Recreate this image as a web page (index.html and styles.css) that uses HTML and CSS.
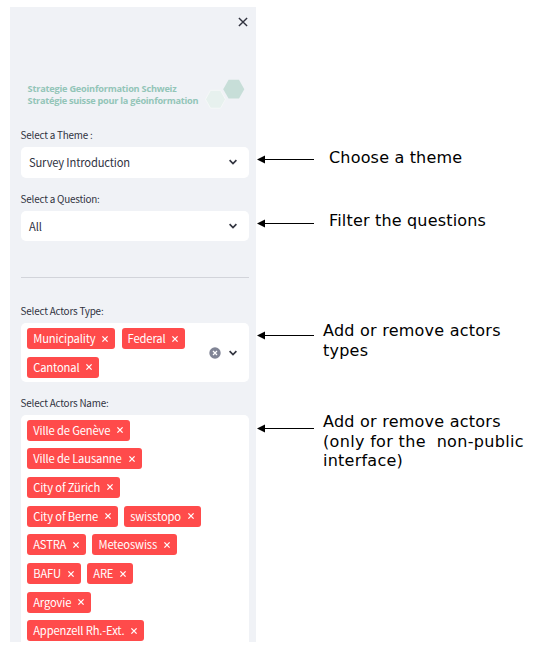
FILE: index.html
```html
<!DOCTYPE html>
<html lang="en">
<head>
<meta charset="utf-8">
<title>Survey sidebar guide</title>
<link rel="stylesheet" href="styles.css">
</head>
<body>
<svg class="defs" width="0" height="0" aria-hidden="true">
  <symbol id="cross" viewBox="0 0 8 8"><path d="M1.4 1.4 6.6 6.6M6.6 1.4 1.4 6.6"/></symbol>
  <symbol id="chevron" viewBox="0 0 10 8"><path d="M1.6 2.2 5 5.5 8.4 2.2"/></symbol>
  <symbol id="arrow" viewBox="0 0 57 9"><path d="M6 4.5H57" stroke="#000" stroke-width="1"/><path d="M0 4.5 8 .5V8.5Z"/></symbol>
</svg>
<main class="guide">
  <aside class="sidebar">
    <header class="top"><svg class="close" viewBox="0 0 10 10"><path d="M.9.9 9.1 9.1M9.1.9.9 9.1"/></svg></header>
    <div class="brand">
      <p class="brand-text"><span class="de">Strategie Geoinformation Schweiz</span><br><span class="fr">Stratégie suisse pour la géoinformation</span></p>
      <svg class="hexes" viewBox="0 0 42 32"><path class="light" d="M.5 20.3 5.5 11.3H15.5L20.5 20.3 15.5 29.2H5.5Z"/><path class="dark" d="M18.2 10.2 23.6.7H34L39.3 10.2 34 19.6H23.6Z"/></svg>
    </div>
    <section class="field">
      <label>Select a Theme :</label>
      <div class="select"><span>Survey Introduction</span><svg class="chevron"><use href="#chevron"/></svg></div>
    </section>
    <section class="field question">
      <label>Select a Question:</label>
      <div class="select"><span>All</span><svg class="chevron"><use href="#chevron"/></svg></div>
    </section>
    <hr>
    <section class="field types">
      <label>Select Actors Type:</label>
      <div class="multi">
        <div class="tags">
          <div class="row"><span class="tag">Municipality<svg><use href="#cross"/></svg></span><span class="tag">Federal<svg><use href="#cross"/></svg></span></div>
          <div class="row"><span class="tag">Cantonal<svg><use href="#cross"/></svg></span></div>
        </div>
        <svg class="clear" viewBox="0 0 12 12"><circle cx="6" cy="6" r="5.7"/><path d="M4 4 8 8M8 4 4 8"/></svg>
        <svg class="chevron"><use href="#chevron"/></svg>
      </div>
    </section>
    <section class="field names">
      <label>Select Actors Name:</label>
      <div class="multi">
        <div class="tags">
          <div class="row"><span class="tag">Ville de Genève<svg><use href="#cross"/></svg></span></div>
          <div class="row"><span class="tag">Ville de Lausanne<svg><use href="#cross"/></svg></span></div>
          <div class="row"><span class="tag">City of Zürich<svg><use href="#cross"/></svg></span></div>
          <div class="row"><span class="tag">City of Berne<svg><use href="#cross"/></svg></span><span class="tag">swisstopo<svg><use href="#cross"/></svg></span></div>
          <div class="row"><span class="tag">ASTRA<svg><use href="#cross"/></svg></span><span class="tag">Meteoswiss<svg><use href="#cross"/></svg></span></div>
          <div class="row"><span class="tag">BAFU<svg><use href="#cross"/></svg></span><span class="tag">ARE<svg><use href="#cross"/></svg></span></div>
          <div class="row"><span class="tag">Argovie<svg><use href="#cross"/></svg></span></div>
          <div class="row"><span class="tag">Appenzell Rh.-Ext.<svg><use href="#cross"/></svg></span></div>
        </div>
      </div>
    </section>
  </aside>
  <div class="notes">
    <div class="note short"><svg><use href="#arrow"/></svg><p>Choose a theme</p></div>
    <div class="note short second"><svg><use href="#arrow"/></svg><p>Filter the questions</p></div>
    <div class="note types-note"><svg><use href="#arrow"/></svg><p>Add or remove actors<br>types</p></div>
    <div class="note names-note"><svg><use href="#arrow"/></svg><p>Add or remove actors<br><span class="wide">(only for the&nbsp; non-public</span><br>interface)</p></div>
  </div>
</main>
</body>
</html>
```
FILE: styles.css
```css
* { box-sizing: border-box; }
body { margin: 0; background: #fff; }
p { margin: 0; }
.defs { position: absolute; }
svg { display: block; flex: none; }
.guide { display: grid; grid-template-columns: 246px 1fr; padding: 7px 0 0 10px; }

.sidebar {
  height: 635px;
  overflow: hidden;
  padding: 0 7px 0 10.6px;
  background: #f0f2f6;
  color: #31333f;
  font-family: "Noto Sans CJK JP", "Noto Sans", sans-serif;
  font-size: 11.2px;
  letter-spacing: -.16px;
}
.top { height: 72px; display: flex; justify-content: flex-end; padding: 9.5px 1px 0 0; }
.close { width: 10px; height: 10px; fill: none; stroke: #31333f; stroke-width: 1.4; }
.brand { display: flex; height: 48px; padding-left: 7px; }
.brand-text {
  width: 177.5px;
  padding-top: 4px;
  font: 700 9.2px/12px "Open Sans", sans-serif;
  color: #93c5b8;
  white-space: nowrap;
}
.de { letter-spacing: -.22px; }
.fr { letter-spacing: -.26px; }
.hexes { width: 42px; height: 32px; }
.light { fill: #e7f1ee; stroke: #f5f8f8; }
.dark { fill: #c7ded8; }

label { display: block; height: 20px; line-height: 16px; font-size: 9.9px; letter-spacing: -.2px; white-space: nowrap; }
.select {
  display: flex; align-items: center; justify-content: space-between;
  height: 30.6px; padding: 0 11px 0 8.4px;
  border-radius: 5px; background: #fff;
}
.question { margin-top: 13.2px; }
.chevron { width: 10px; height: 8px; fill: none; stroke: #31333f; stroke-width: 1.7; }
hr { margin: 36px 0 25px; border: 0; border-top: 1px solid #d2d4da; }
.multi {
  display: flex; align-items: center;
  padding: 4.7px 11px 4.5px 6.6px;
  border-radius: 5px; background: #fff;
}
.tags { flex: 1; display: grid; row-gap: 7.6px; }
.row { display: flex; gap: 6.2px; }
.tag {
  display: flex; align-items: center;
  height: 21.1px; padding: 0 6px 1px 6px;
  border-radius: 3px; background: #ff4b4b; color: #fff;
  letter-spacing: -.14px;
  white-space: nowrap;
}
.tag svg { width: 8px; height: 8px; margin: 1px 0 0 6px; fill: none; stroke: #fff; stroke-width: 1.3; }
.clear { width: 12px; height: 12px; margin-right: 7px; fill: #808495; }
.clear path { stroke: #fff; stroke-width: 1.2; }
.names { margin-top: 12.5px; }

.notes {
  display: grid; grid-template-rows: 63px 110px 91px 80px; align-content: start;
  padding: 141px 0 0 1px;
  color: #000;
  font: 16px/19.6px "DejaVu Sans", sans-serif;
  letter-spacing: .24px;
  white-space: nowrap;
}
.wide { letter-spacing: .33px; }
.note { display: flex; gap: 9px; }
.note.short { gap: 15px; letter-spacing: .18px; }
.note svg { width: 57px; height: 9px; margin-top: 7px; }
.second svg { margin-top: 8px; }
.types-note svg { margin-top: 10px; }
.names-note svg { margin-top: 12px; }
```
